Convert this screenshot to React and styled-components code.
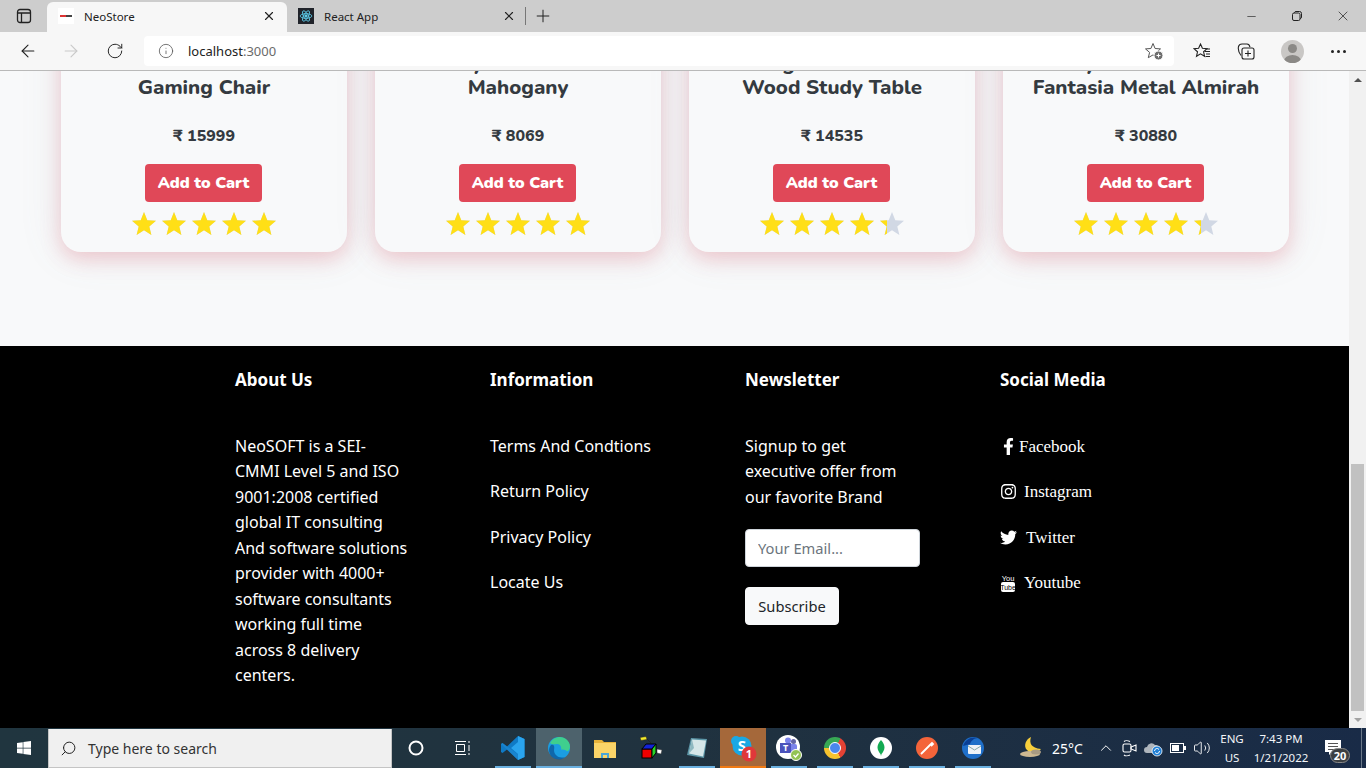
import React from 'react';
import styled, { createGlobalStyle } from 'styled-components';
import { ArrowLeft, ArrowRight, RotateCw, Info, Plus, X, Minus, ChevronUp, Search, Volume2 } from 'lucide-react';
import { FaFacebookF, FaInstagram, FaTwitter, FaWindows } from 'react-icons/fa';

const GlobalStyle = createGlobalStyle`
    * { box-sizing: border-box; }
    html, body { margin: 0; height: 100%; overflow: hidden; }
    body { font-family: "Noto Sans", "Open Sans", sans-serif; }
`;

const Screen = styled.div`
    width: 1366px;
    height: 768px;
    display: flex;
    flex-direction: column;
    overflow: hidden;
`;

/* browser chrome */
const TabStrip = styled.div`
    height: 32px;
    flex: none;
    display: flex;
    align-items: flex-end;
    background: #cdcdcd;
    color: #222;
    font-size: 11.5px;
`;

const SidebarButton = styled.div`
    width: 47px;
    height: 32px;
    display: flex;
    align-items: center;
    justify-content: center;
`;

const Tab = styled.div`
    width: 240px;
    height: 30px;
    display: flex;
    align-items: center;
    padding: 0 11px 2px;
    border-radius: 6px 6px 0 0;
    background: ${(p) => (p.$active ? '#f7f7f7' : 'transparent')};
    span { margin-left: 10px; flex: 1; }
`;

const Favicon = styled.div`
    width: 16px;
    height: 16px;
    display: flex;
    align-items: center;
    justify-content: center;
    background: ${(p) => (p.$dark ? '#20232a' : '#fff')};
`;

const TabDivider = styled.div`
    width: 1px;
    height: 18px;
    margin: 0 0 7px -2px;
    background: #777;
`;

const NewTab = styled.div`
    width: 34px;
    height: 30px;
    display: flex;
    align-items: center;
    justify-content: center;
    padding-bottom: 2px;
`;

const WindowControls = styled.div`
    margin-left: auto;
    height: 32px;
    display: flex;
    align-items: center;
`;

const WindowButton = styled.div`
    width: 46px;
    display: flex;
    justify-content: center;
`;

const Toolbar = styled.div`
    height: 39px;
    flex: none;
    display: flex;
    align-items: flex-start;
    padding-top: 4px;
    background: #f7f7f7;
    border-bottom: 1px solid #b9b9b9;
`;

const ToolButton = styled.div`
    width: ${(p) => p.$w || 44}px;
    height: 30px;
    flex: none;
    display: flex;
    align-items: center;
    justify-content: center;
`;

const AddressBar = styled.div`
    width: 1030px;
    height: 30px;
    display: flex;
    align-items: center;
    padding: 0 10px 0 14px;
    background: #fff;
    border-radius: 4px;
    font-size: 13px;
    color: #222;
    em { font-style: normal; color: #6b6b6b; }
    svg.info { margin-right: 14px; }
    svg.fav { margin-left: auto; }
`;

const Avatar = styled.div`
    width: 23px;
    height: 23px;
    border-radius: 50%;
    background: #c9c7c5;
    position: relative;
    overflow: hidden;
    &::before {
        content: '';
        position: absolute;
        left: 7px;
        top: 4px;
        width: 9px;
        height: 9px;
        border-radius: 50%;
        background: #8b8986;
    }
    &::after {
        content: '';
        position: absolute;
        left: 3px;
        top: 15px;
        width: 17px;
        height: 12px;
        border-radius: 50%;
        background: #8b8986;
    }
`;

const Dots = styled.div`
    display: flex;
    gap: 3px;
    i { width: 3px; height: 3px; border-radius: 50%; background: #222; }
`;

/* page */
const Body = styled.div`
    flex: 1;
    min-height: 0;
    display: flex;
`;

const Page = styled.div`
    flex: 1;
    display: flex;
    flex-direction: column;
    overflow: hidden;
    background: #f8f9fa;
`;

const ProductSection = styled.section`
    display: grid;
    grid-template-columns: repeat(4, 286px);
    gap: 28px;
    margin-top: -61px;
    padding: 0 0 94px 61px;
`;

const Card = styled.div`
    height: 242px;
    padding-top: 41px;
    display: flex;
    flex-direction: column;
    align-items: center;
    background: #f8f9fa;
    border-radius: 20px;
    color: #343a40;
    font-family: "Nunito", "Noto Sans", sans-serif;
    box-shadow: 0 7px 20px rgba(224, 72, 88, 0.25), 0 0 44px rgba(120, 130, 160, 0.12);
`;

const Title = styled.h3`
    margin: 0;
    height: 48px;
    font-size: 20.5px;
    font-weight: 800;
    line-height: 24px;
    text-align: center;
    white-space: pre-line;
`;

const Price = styled.div`
    margin-top: 25px;
    font-size: 16px;
    font-weight: 800;
    line-height: 24px;
`;

const AddButton = styled.button`
    width: 117px;
    height: 38px;
    margin: 16px 1px 0 0;
    padding: 0;
    border: none;
    border-radius: 4px;
    background: #e04858;
    color: #fff;
    font-family: inherit;
    font-size: 16px;
    font-weight: 900;
`;

const Stars = styled.div`
    margin-top: 6px;
    display: flex;
    gap: 2px;
`;

const StarCell = styled.div`
    position: relative;
    width: 28px;
    height: 30px;
    color: #d1d8e4;
`;

const StarFill = styled.div`
    position: absolute;
    left: 0;
    top: 0;
    height: 30px;
    overflow: hidden;
    color: #ffdf16;
`;

const StarShape = () => (
    <svg width="28" height="30" viewBox="0 0 28 30">
        <path fill="currentColor" d="M14 4l3.3 8.2 8.7.6-6.700 5.600 2.100 8.600L14 22.300 6.600 27l2.100-8.600L2 12.800l8.700-.6z" />
    </svg>
);

const Rating = ({ fills }) => (
    <Stars>
        {fills.map((fill, i) => (
            <StarCell key={i}>
                <StarShape />
                <StarFill style={{ width: `${fill}%` }}>
                    <StarShape />
                </StarFill>
            </StarCell>
        ))}
    </Stars>
);

/* footer */
const Footer = styled.footer`
    flex: 1;
    display: grid;
    grid-template-columns: repeat(4, 255px);
    align-content: start;
    padding: 21px 0 0 235px;
    background: #000;
    color: #fff;
    font-size: 16px;
    line-height: 25.5px;
`;

const FooterHeading = styled.h4`
    margin: 0 0 40.500px;
    font-size: 17px;
    font-weight: 700;
    line-height: 26px;
`;

const Paragraph = styled.p`
    margin: 0;
    white-space: pre-line;
`;

const LinkList = styled.div`
    display: flex;
    flex-direction: column;
    gap: 20px;
`;

const SocialLink = styled.div`
    display: flex;
    align-items: center;
    height: 25.5px;
    font-family: "Liberation Serif", serif;
    font-size: 17px;
    svg { margin-right: ${(p) => p.$gap}px; }
`;

const EmailInput = styled.input`
    display: block;
    width: 175px;
    height: 38px;
    margin-top: 18.5px;
    padding: 0 12px;
    border: 1px solid #ced4da;
    border-radius: 4px;
    background: #fff;
    font-family: inherit;
    font-size: 14.7px;
    &::placeholder { color: #6c757d; opacity: 1; }
`;

const SubscribeButton = styled.button`
    display: block;
    width: 94px;
    height: 38px;
    margin-top: 20px;
    padding: 0;
    border: 1px solid #f8f9fa;
    border-radius: 4px;
    background: #f8f9fa;
    color: #212529;
    font-family: inherit;
    font-size: 14.7px;
`;

/* scrollbar */
const ScrollBar = styled.div`
    width: 17px;
    flex: none;
    display: flex;
    flex-direction: column;
    background: #f1f1f1;
`;

const ScrollArrow = styled.div`
    height: 17px;
    flex: none;
    display: flex;
    align-items: center;
    justify-content: center;
    &::before {
        content: '';
        border-left: 4px solid transparent;
        border-right: 4px solid transparent;
        ${(p) => (p.$down ? 'border-top: 4px solid #a3a3a3;' : 'border-bottom: 4px solid #505050;')}
    }
`;

const ScrollTrack = styled.div`
    flex: 1;
    display: flex;
    flex-direction: column;
    justify-content: flex-end;
    align-items: center;
`;

const ScrollThumb = styled.div`
    width: 13px;
    height: 247px;
    background: #c1c1c1;
`;

/* taskbar */
const Taskbar = styled.div`
    height: 40px;
    flex: none;
    display: flex;
    background: linear-gradient(90deg, #20353f 0%, #20323f 50%, #192b47 100%);
    color: #fff;
    font-family: "Noto Sans", sans-serif;
`;

const StartButton = styled.div`
    width: 48px;
    display: flex;
    align-items: center;
    justify-content: center;
`;

const SearchBox = styled.div`
    width: 344px;
    display: flex;
    align-items: center;
    padding-left: 11px;
    margin-top: 1px;
    background: #f0f0f0;
    border: 1px solid #c4c4c4;
    border-width: 0 1px 1px;
    color: #333;
    font-size: 14px;
    svg { margin-right: 11px; transform: scaleX(-1); }
`;

const SystemButton = styled.div`
    width: ${(p) => p.$w}px;
    display: flex;
    align-items: center;
    justify-content: center;
`;

const AppList = styled.div`
    margin-left: 4px;
    display: flex;
`;

const AppSlot = styled.div`
    position: relative;
    width: 46px;
    display: flex;
    align-items: center;
    justify-content: center;
    background: ${(p) => p.$bg || 'transparent'};
    &::after {
        content: '';
        display: ${(p) => (p.$line ? 'block' : 'none')};
        position: absolute;
        bottom: 0;
        left: ${(p) => (p.$full ? 0 : 5)}px;
        right: ${(p) => (p.$full ? 0 : 5)}px;
        height: 2px;
        background: ${(p) => p.$line};
    }
`;

const ChromeLogo = styled.div`
    width: 22px;
    height: 22px;
    border-radius: 50%;
    display: flex;
    align-items: center;
    justify-content: center;
    background: conic-gradient(from 30deg, #e34234 0 120deg, #f7c32e 120deg 240deg, #37a854 240deg 360deg);
    &::after {
        content: '';
        width: 10px;
        height: 10px;
        border-radius: 50%;
        background: #4a87ee;
        border: 1.500px solid #fff;
    }
`;

const Tray = styled.div`
    margin-left: auto;
    display: flex;
    align-items: center;
    font-size: 11.5px;
`;

const Weather = styled.div`
    width: 70px;
    display: flex;
    align-items: center;
    font-size: 14px;
    margin-right: 5px;
    svg { margin-right: 9px; }
`;

const TrayIcon = styled.div`
    width: 24px;
    display: flex;
    justify-content: center;
`;

const ClockText = styled.div`
    width: ${(p) => p.$w}px;
    text-align: center;
    line-height: 19px;
    color: #f3f5f8;
`;

const Notifications = styled.div`
    position: relative;
    width: 49px;
    height: 40px;
    display: flex;
    justify-content: center;
    padding: 12px 7px 0 0;
`;

const CountBadge = styled.div`
    position: absolute;
    right: 11px;
    bottom: 5px;
    width: 20px;
    height: 15px;
    border-radius: 8px;
    background: #3b3f42;
    border: 1px solid #888;
    font-size: 11px;
    font-weight: 700;
    line-height: 13px;
    text-align: center;
`;

const ShowDesktop = styled.div`
    width: 5px;
    height: 40px;
    border-left: 1px solid #6a7888;
`;

/* drawn icons */
const SidebarIcon = () => (
    <svg width="16" height="16" viewBox="0 0 16 16" fill="none" stroke="#222" strokeWidth="1.300">
        <rect x="1.500" y="1.500" width="13" height="13" rx="2.500" />
        <path d="M1.500 5h13M5.500 5v9.500" fill="none" />
    </svg>
);

const ReactFavicon = () => (
    <svg width="14" height="14" viewBox="-12 -12 24 24" fill="none" stroke="#5fd0ee" strokeWidth="1.400">
        <circle r="2" fill="#5fd0ee" />
        <ellipse rx="10" ry="4" />
        <ellipse rx="10" ry="4" transform="rotate(60)" />
        <ellipse rx="10" ry="4" transform="rotate(120)" />
    </svg>
);

const NeoFavicon = () => (
    <svg width="16" height="16" viewBox="0 0 16 16">
        <rect x="2" y="7" width="6" height="2" fill="#d33" />
        <rect x="8" y="7" width="6" height="2" fill="#444" />
    </svg>
);

const RestoreIcon = () => (
    <svg width="12" height="12" viewBox="0 0 12 12" fill="none" stroke="#222">
        <rect x="1.500" y="3" width="7.500" height="7.500" rx="1.500" />
        <path d="M3.500 3V2.500a1.500 1.500 0 0 1 1.500-1h3.500a2 2 0 0 1 2 2V7a1.500 1.500 0 0 1-1.500 1.500" />
    </svg>
);

const FavAddIcon = () => (
    <svg className="fav" width="19" height="19" viewBox="0 0 19 19" fill="none">
        <path stroke="#555" d="M8 1.500l2.100 5 5.400.4-4.100 3.500 1.300 5.300L8 12.900l-4.700 2.800 1.300-5.300L.5 6.900l5.400-.4z" />
        <circle cx="13.500" cy="13.500" r="4.500" fill="#6e6e6e" stroke="#fff" />
        <path stroke="#fff" d="M13.500 11.500v4M11.500 13.500h4" />
    </svg>
);

const FavoritesIcon = () => (
    <svg width="18" height="18" viewBox="0 0 18 18" fill="none" stroke="#222" strokeWidth="1.100">
        <path d="M7.500 2l1.900 4.300 4.600.4-3.400 3.100 1 4.500-4.100-2.400-4 2.400 1-4.500L1 6.700l4.600-.4z" />
        <path d="M12 9.500h5M13 12h4M12.500 14.500h4.500M13.500 7h3.500" />
    </svg>
);

const CollectionsIcon = () => (
    <svg width="19" height="19" viewBox="0 0 19 19" fill="none" stroke="#222" strokeWidth="1.100">
        <path d="M4 13.500C2 11 1 7 1.500 4.500 2 2.500 3.500 2 5 2h5c1.500 0 2.500 1 3 3" />
        <rect x="5" y="6" width="12" height="11" rx="2" />
        <path d="M11 8.500v6M8 11.500h6" />
    </svg>
);

const YoutubeStackIcon = () => (
    <svg width="16" height="18" viewBox="0 0 16 18">
        <rect x="1" y="8" width="14" height="10" rx="2" fill="#fff" />
        <text x="8" y="6.500" fontSize="7.500" textAnchor="middle" fill="#fff" fontFamily="Liberation Sans Narrow, Liberation Sans, sans-serif">You</text>
        <text x="8" y="15.500" fontSize="7" textAnchor="middle" fill="#000" fontFamily="Liberation Sans Narrow, Liberation Sans, sans-serif">Tube</text>
    </svg>
);

const VsCodeIcon = () => (
    <svg width="26" height="26" viewBox="0 0 26 26">
        <path fill="#0f7ac6" d="M18 1l6.500 3v18L18 25 7 14.500 2.500 18 1 17v-8l1.500-1L7 11.500z" />
        <path fill="#2aa4ee" d="M18 1l6.500 3v18L18 25zM18 7l-7 6 7 6z" fillRule="evenodd" />
        <path fill="#1f8ad6" d="M2.500 8L18 19.500V25L1 9z" opacity="0.6" />
    </svg>
);

const EdgeIcon = () => (
    <svg width="24" height="24" viewBox="0 0 24 24">
        <circle cx="12" cy="12" r="11" fill="#1b9de2" />
        <path fill="#3fcf8e" d="M3 7C6 1 14-1 19 3c4 3 5 8 3 11-2 2-6 2-8 0 1-3-1-6-4-6-3 0-5 1-7-1z" />
        <path fill="#0c5a9e" d="M7 14c0 5 5 9 11 7-2 2-4 2.500-6 2.500C6 23.500 2 19 2 14c0-2 1-4 2-5 2-1 4 0 3 5z" opacity="0.8" />
        <ellipse cx="15" cy="16" rx="5" ry="2.500" fill="#1b9de2" />
    </svg>
);

const FolderIcon = () => (
    <svg width="22" height="20" viewBox="0 0 22 20">
        <path fill="#e8b23a" d="M0 2h8l2 2h12v4H0z" />
        <rect y="5" width="22" height="15" fill="#fbd468" />
        <path fill="#4aa5d8" d="M7 15h8v5h-2v-3H9v3H7z" />
    </svg>
);

const CubeIcon = () => (
    <svg width="26" height="24" viewBox="0 0 26 24">
        <path fill="#f4ea2a" stroke="#222" strokeWidth="0.500" d="M2 1.500l6-1 1 3-6 1z" />
        <path d="M9 3l4 4" stroke="#222" strokeWidth="0.800" />
        <rect x="4" y="13" width="10" height="9" fill="#f00000" stroke="#000" />
        <path fill="#1222d8" stroke="#000" d="M4 13l4-5h10l-4 5z" />
        <path fill="#28d428" stroke="#000" d="M14 13l4-5v9l-4 5z" />
        <path fill="#fff" stroke="#333" strokeWidth="0.500" d="M19 13l5 1-1 4-4-1z" />
    </svg>
);

const NotepadIcon = () => (
    <svg width="24" height="24" viewBox="0 0 24 24">
        <path fill="#5d97a8" d="M6 2l16 1-3 19-17-3z" />
        <path fill="#d6e6e8" d="M7 3.500l14 1-3 16-14-3z" />
        <path fill="#8fb8c0" d="M7 3.500L4 17.500 9 12z" />
    </svg>
);

const SkypeIcon = () => (
    <svg width="28" height="28" viewBox="0 0 28 28">
        <circle cx="7" cy="7" r="5" fill="#1aa8e4" />
        <circle cx="13" cy="12" r="9.500" fill="#1aa8e4" />
        <text x="13" y="17" fontSize="15" fontWeight="700" textAnchor="middle" fill="#fff" fontFamily="Noto Sans, sans-serif">S</text>
        <circle cx="20" cy="20" r="7.500" fill="#e0383a" />
        <text x="20" y="24" fontSize="11" fontWeight="700" textAnchor="middle" fill="#fff" fontFamily="Noto Sans, sans-serif">1</text>
    </svg>
);

const TeamsIcon = () => (
    <svg width="26" height="26" viewBox="0 0 26 26">
        <circle cx="12" cy="12" r="12" fill="#fff" />
        <circle cx="17.500" cy="6.500" r="2.500" fill="#6264a7" />
        <circle cx="12" cy="5.500" r="3" fill="#7b83eb" />
        <rect x="13" y="9" width="8" height="9" rx="2" fill="#7b83eb" />
        <rect x="4" y="8" width="11" height="10" fill="#4b53bc" />
        <text x="9.500" y="16" fontSize="9" fontWeight="700" textAnchor="middle" fill="#fff" fontFamily="Noto Sans, sans-serif">T</text>
        <circle cx="20" cy="20" r="5.500" fill="#92c353" stroke="#fff" />
        <path d="M17.500 20l2 2 3-3.500" stroke="#fff" strokeWidth="1.300" fill="none" />
    </svg>
);

const MongoIcon = () => (
    <svg width="22" height="22" viewBox="0 0 22 22">
        <circle cx="11" cy="11" r="11" fill="#fff" />
        <path fill="#13aa52" d="M11 3c2.500 3 3.500 5 3.500 7.500S12.500 16 11.500 17l-.5 2-.5-2c-1-1-3-4-3-6.500S8.500 6 11 3z" />
    </svg>
);

const PostmanIcon = () => (
    <svg width="22" height="22" viewBox="0 0 22 22">
        <circle cx="11" cy="11" r="11" fill="#f4643a" />
        <path d="M5 17l9-9M14 8l2-2 1 1-2 2" stroke="#fff" strokeWidth="1.800" fill="none" />
    </svg>
);

const ThunderbirdIcon = () => (
    <svg width="24" height="24" viewBox="0 0 24 24">
        <circle cx="12" cy="12" r="11" fill="#1f6fc9" />
        <path fill="#0a3f94" d="M2 10C4 3 11 0 17 2c-4 0-7 3-8 6z" />
        <rect x="7" y="9" width="13" height="9" rx="1" fill="#eef2f7" />
        <path d="M7 10l6.500 4 6.500-4" stroke="#8aa" fill="none" />
    </svg>
);

const MoonIcon = () => (
    <svg width="24" height="22" viewBox="0 0 24 22">
        <path fill="#f7cf3c" d="M12 0c-2 6 0 11 10 12-3 4-10 5-14 1S7 2 12 0z" />
        <ellipse cx="11" cy="17" rx="10" ry="3" fill="#cdb892" />
        <ellipse cx="17" cy="15" rx="5" ry="2.500" fill="#a89a82" />
    </svg>
);

const MeetIcon = () => (
    <svg width="16" height="20" viewBox="0 0 16 20" fill="none" stroke="#fff" strokeWidth="1.100">
        <rect x="1" y="6" width="8" height="8" rx="1.500" />
        <path d="M9 9l5-2v6l-5-2zM2 3.500C3 2.500 6 2.500 8 3.500M2 17c1 1 4 1 6 0" />
    </svg>
);

const CloudIcon = () => (
    <svg width="20" height="18" viewBox="0 0 20 18">
        <path fill="#aeb5bc" d="M3 14a3 3 0 0 1 0-6 4.500 4.500 0 0 1 8-2 3.500 3.500 0 0 1 4 4H15v4z" />
        <circle cx="13" cy="12" r="5" fill="#1f7fd6" stroke="#fff" strokeWidth="0.800" />
        <path d="M10.500 12a2.500 2.500 0 0 1 4.500-1.500M15.500 12a2.500 2.500 0 0 1-4.500 1.500" stroke="#fff" fill="none" />
    </svg>
);

const BatteryIcon = () => (
    <svg width="16" height="10" viewBox="0 0 16 10">
        <rect x="0.500" y="0.500" width="13" height="9" fill="none" stroke="#fff" />
        <rect x="2" y="2" width="7" height="6" fill="#fff" />
        <rect x="14" y="3" width="2" height="4" fill="#fff" />
    </svg>
);

const NotificationIcon = () => (
    <svg width="16" height="15" viewBox="0 0 16 15">
        <path fill="#fff" d="M0 0h16v12H7l-3 3v-3H0z" />
        <path stroke="#555" d="M3 3.500h10M3 6.500h10M3 9.500h7" />
    </svg>
);

const products = [
    { title: 'Premium Leather\nGaming Chair', price: 15999, stars: [100, 100, 100, 100, 92] },
    { title: 'Royal Oak Bed\nMahogany', price: 8069, stars: [100, 100, 100, 100, 100] },
    { title: 'Bingo Solid Teak\nWood Study Table', price: 14535, stars: [100, 100, 100, 100, 33] },
    { title: 'Royal Home Steel\nFantasia Metal Almirah', price: 30880, stars: [100, 100, 100, 100, 33] },
];

const aboutText = `NeoSOFT is a SEI-
CMMI Level 5 and ISO
9001:2008 certified
global IT consulting
And software solutions
provider with 4000+
software consultants
working full time
across 8 delivery
centers.`;

const newsletterText = `Signup to get
executive offer from
our favorite Brand`;

const infoLinks = ['Terms And Condtions', 'Return Policy', 'Privacy Policy', 'Locate Us'];

const socials = [
    { name: 'Facebook', icon: <FaFacebookF size={17} />, gap: 2 },
    { name: 'Instagram', icon: <FaInstagram size={17} />, gap: 7 },
    { name: 'Twitter', icon: <FaTwitter size={17} />, gap: 9 },
    { name: 'Youtube', icon: <YoutubeStackIcon />, gap: 8 },
];

const apps = [
    { key: 'code', node: <VsCodeIcon />, line: '#6ab0e0' },
    { key: 'edge', node: <EdgeIcon />, line: '#6ab0e0', bg: '#4d626c', full: true },
    { key: 'folder', node: <FolderIcon /> },
    { key: 'cube', node: <CubeIcon /> },
    { key: 'notepad', node: <NotepadIcon />, line: '#6ab0e0' },
    { key: 'skype', node: <SkypeIcon />, line: '#f07a14', bg: '#a5683a', full: true },
    { key: 'teams', node: <TeamsIcon />, line: '#6ab0e0' },
    { key: 'chrome', node: <ChromeLogo />, line: '#6ab0e0' },
    { key: 'mongo', node: <MongoIcon />, line: '#6ab0e0' },
    { key: 'postman', node: <PostmanIcon />, line: '#6ab0e0' },
    { key: 'thunderbird', node: <ThunderbirdIcon />, line: '#6ab0e0' },
];

function App() {
    return (
        <Screen>
            <GlobalStyle />
            <TabStrip>
                <SidebarButton><SidebarIcon /></SidebarButton>
                <Tab $active>
                    <Favicon><NeoFavicon /></Favicon>
                    <span>NeoStore</span>
                    <X size={14} color="#222" />
                </Tab>
                <Tab>
                    <Favicon $dark><ReactFavicon /></Favicon>
                    <span>React App</span>
                    <X size={14} color="#222" />
                </Tab>
                <TabDivider />
                <NewTab><Plus size={20} color="#222" strokeWidth={1.200} /></NewTab>
                <WindowControls>
                    <WindowButton><Minus size={13} color="#222" strokeWidth={1.200} /></WindowButton>
                    <WindowButton><RestoreIcon /></WindowButton>
                    <WindowButton><X size={16} color="#222" strokeWidth={1.100} /></WindowButton>
                </WindowControls>
            </TabStrip>
            <Toolbar>
                <ToolButton $w={56}><ArrowLeft size={20} color="#222" strokeWidth={1.300} /></ToolButton>
                <ToolButton $w={30}><ArrowRight size={20} color="#c9c9c9" strokeWidth={1.300} /></ToolButton>
                <ToolButton $w={58}><RotateCw size={18} color="#222" strokeWidth={1.300} /></ToolButton>
                <AddressBar>
                    <Info className="info" size={16} color="#555" strokeWidth={1.200} />
                    localhost<em>:3000</em>
                    <FavAddIcon />
                </AddressBar>
                <ToolButton $w={56}><FavoritesIcon /></ToolButton>
                <ToolButton $w={32}><CollectionsIcon /></ToolButton>
                <ToolButton $w={60}><Avatar /></ToolButton>
                <ToolButton $w={32}><Dots><i /><i /><i /></Dots></ToolButton>
            </Toolbar>
            <Body>
                <Page>
                    <ProductSection>
                        {products.map((item) => (
                            <Card key={item.price}>
                                <Title>{item.title}</Title>
                                <Price>₹ {item.price}</Price>
                                <AddButton>Add to Cart</AddButton>
                                <Rating fills={item.stars} />
                            </Card>
                        ))}
                    </ProductSection>
                    <Footer>
                        <div>
                            <FooterHeading>About Us</FooterHeading>
                            <Paragraph>{aboutText}</Paragraph>
                        </div>
                        <div>
                            <FooterHeading>Information</FooterHeading>
                            <LinkList>
                                {infoLinks.map((text) => <div key={text}>{text}</div>)}
                            </LinkList>
                        </div>
                        <div>
                            <FooterHeading>Newsletter</FooterHeading>
                            <Paragraph>{newsletterText}</Paragraph>
                            <EmailInput placeholder="Your Email..." />
                            <SubscribeButton>Subscribe</SubscribeButton>
                        </div>
                        <div>
                            <FooterHeading>Social Media</FooterHeading>
                            <LinkList>
                                {socials.map(({ name, icon, gap }) => (
                                    <SocialLink key={name} $gap={gap}>
                                        {icon}
                                        {name}
                                    </SocialLink>
                                ))}
                            </LinkList>
                        </div>
                    </Footer>
                </Page>
                <ScrollBar>
                    <ScrollArrow />
                    <ScrollTrack><ScrollThumb /></ScrollTrack>
                    <ScrollArrow $down />
                </ScrollBar>
            </Body>
            <Taskbar>
                <StartButton><FaWindows size={16} color="#fff" /></StartButton>
                <SearchBox>
                    <Search size={17} color="#222" strokeWidth={1.400} />
                    Type here to search
                </SearchBox>
                <SystemButton $w={48}>
                    <svg width="16" height="16" viewBox="0 0 16 16" fill="none" stroke="#fff" strokeWidth="2"><circle cx="8" cy="8" r="6.500" /></svg>
                </SystemButton>
                <SystemButton $w={46}>
                    <svg width="16" height="16" viewBox="0 0 16 16" fill="none" stroke="#fff"><path d="M0 1.500h11M0 14.500h11M1.500 4.500h8v7h-8zM14 1v2M14 5v6M14 13v2" /></svg>
                </SystemButton>
                <AppList>
                    {apps.map((app) => (
                        <AppSlot key={app.key} $line={app.line} $bg={app.bg} $full={app.full}>{app.node}</AppSlot>
                    ))}
                </AppList>
                <Tray>
                    <Weather><MoonIcon />25°C</Weather>
                    <TrayIcon><ChevronUp size={18} color="#fff" strokeWidth={1.300} /></TrayIcon>
                    <TrayIcon><MeetIcon /></TrayIcon>
                    <TrayIcon><CloudIcon /></TrayIcon>
                    <TrayIcon><BatteryIcon /></TrayIcon>
                    <TrayIcon><Volume2 size={18} color="#fff" strokeWidth={1.200} /></TrayIcon>
                    <ClockText $w={36}>ENG<br />US</ClockText>
                    <ClockText $w={62}>7:43 PM<br />1/21/2022</ClockText>
                    <Notifications><NotificationIcon /><CountBadge>20</CountBadge></Notifications>
                    <ShowDesktop />
                </Tray>
            </Taskbar>
        </Screen>
    );
}

export default App;
